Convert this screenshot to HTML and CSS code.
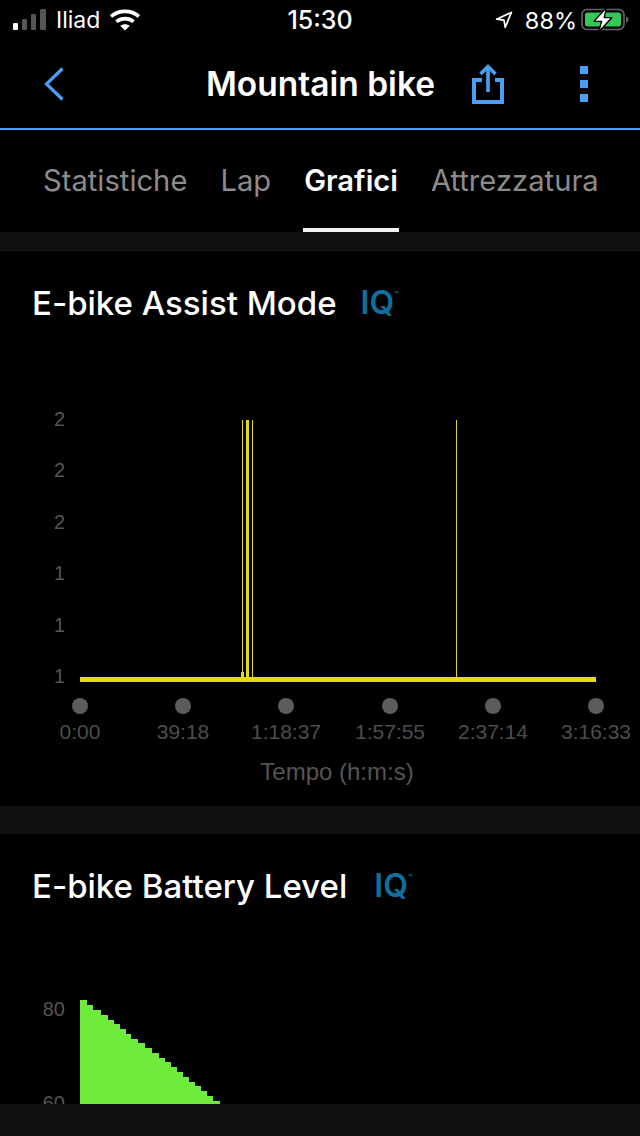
FILE: index.html
```html
<!DOCTYPE html>
<html lang="it">
<head>
  <meta charset="UTF-8" />
  <meta name="viewport" content="width=device-width, initial-scale=1.0" />
  <title>Mountain bike</title>
  <link rel="stylesheet" href="styles.css">
</head>
<body>
  <div class="page">
    <div class="status-bar">
      <div class="status-left">
        <svg class="icon-signal" width="34" height="22" viewBox="0 0 34 22">
          <rect x="0" y="14" width="5" height="7" rx="1.2" fill="#fff" />
          <rect x="9" y="10" width="5" height="11" rx="1.2" fill="#555" />
          <rect x="18" y="5" width="5" height="16" rx="1.2" fill="#555" />
          <rect x="27" y="0" width="6" height="21" rx="1.2" fill="#555" />
        </svg>
        <span class="carrier">Iliad</span>
        <svg class="icon-wifi" width="30" height="22" viewBox="0 0 30 22">
          <path d="M1 7.5C8.8 .6 21.2 .6 29 7.5" fill="none" stroke="#fff" stroke-width="3.6" />
          <path d="M6.4 12.6C11.2 8.6 18.8 8.6 23.6 12.6" fill="none" stroke="#fff" stroke-width="3.6" />
          <path d="M10.2 16.8L15 21.4L19.8 16.8C17 14.6 13 14.6 10.2 16.8Z" fill="#fff" />
        </svg>
      </div>
      <div class="status-time">15:30</div>
      <div class="status-right">
        <svg class="icon-location" width="18" height="18" viewBox="0 0 18 18">
          <path d="M16.4 1.4L1.6 8.2L9 9.2L10.2 16.4Z" fill="none" stroke="#fff" stroke-width="1.7" stroke-linejoin="round" />
        </svg>
        <span class="battery-text">88%</span>
        <svg class="icon-battery" width="48" height="26" viewBox="0 0 48 26">
          <rect x="1" y="2.5" width="42" height="20" rx="5" fill="none" stroke="#666" stroke-width="1.6" />
          <rect x="4" y="5.5" width="36" height="14" rx="2.5" fill="#34c759" />
          <path d="M45 9.5c1.8 .4 2.4 1.6 2.4 3s-.6 2.6-2.4 3Z" fill="#666" />
          <path d="M25.5 .6L13 14.4H20.6L17.6 25L31 10.6H23.2Z" fill="#fff" stroke="#000" stroke-width="1.4" stroke-linejoin="round" />
        </svg>
      </div>
    </div>

    <div class="nav-bar">
      <div class="nav-left">
        <svg width="20" height="34" viewBox="0 0 20 34">
          <path d="M18.5 1.5L2.5 17L18.5 32.5" fill="none" stroke="#4a9ff5" stroke-width="3.2" />
        </svg>
      </div>
      <div class="nav-title">Mountain bike</div>
      <div class="nav-right">
        <svg width="32" height="40" viewBox="0 0 32 40">
          <path d="M10 16H2V38H30V16H23" fill="none" stroke="#4a9ff5" stroke-width="4" />
          <path d="M16 3V28" fill="none" stroke="#4a9ff5" stroke-width="3.6" />
          <path d="M8.5 10L16 2.6L23.5 10" fill="none" stroke="#4a9ff5" stroke-width="3.6" />
        </svg>
        <div class="menu-dots">
          <span></span>
          <span></span>
          <span></span>
        </div>
      </div>
    </div>

    <div class="tabs">
      <div class="tab">Statistiche</div>
      <div class="tab">Lap</div>
      <div class="tab tab-active">Grafici</div>
      <div class="tab">Attrezzatura</div>
    </div>

    <div class="content">
      <div class="card card-assist">
        <div class="card-title">
          <span>E-bike Assist Mode</span>
          <span class="iq">IQ<sup>™</sup></span>
        </div>
        <svg class="chart" width="640" height="466" viewBox="0 340 640 466">
          <g class="y-labels">
            <text x="65" y="426">2</text>
            <text x="65" y="477">2</text>
            <text x="65" y="529">2</text>
            <text x="65" y="580">1</text>
            <text x="65" y="632">1</text>
            <text x="65" y="683">1</text>
          </g>
          <g fill="#e4dc10">
            <rect x="242" y="420" width="1" height="258" />
            <rect x="241" y="672" width="3" height="6" />
            <rect x="246" y="420" width="3" height="258" />
            <rect x="252" y="420" width="1" height="258" />
            <rect x="456" y="420" width="1" height="258" />
            <rect x="80" y="677" width="516" height="5" />
          </g>
          <g fill="#5c5c5c">
            <circle cx="80" cy="706" r="8" />
            <circle cx="183" cy="706" r="8" />
            <circle cx="286" cy="706" r="8" />
            <circle cx="390" cy="706" r="8" />
            <circle cx="493" cy="706" r="8" />
            <circle cx="596" cy="706" r="8" />
          </g>
          <g class="x-labels">
            <text x="80" y="739">0:00</text>
            <text x="183" y="739">39:18</text>
            <text x="286" y="739">1:18:37</text>
            <text x="390" y="739">1:57:55</text>
            <text x="493" y="739">2:37:14</text>
            <text x="596" y="739">3:16:33</text>
          </g>
          <text class="x-title" x="337" y="780">Tempo (h:m:s)</text>
        </svg>
      </div>

      <div class="card card-battery">
        <div class="card-title">
          <span>E-bike Battery Level</span>
          <span class="iq">IQ<sup>™</sup></span>
        </div>
        <svg class="chart" width="640" height="184" viewBox="0 920 640 184">
          <g class="y-labels">
            <text x="65" y="1016">80</text>
            <text x="65" y="1110">60</text>
          </g>
          <path fill="#6fec3a" d="M80 1104V1000H87V1005H93V1010H101V1015H108V1020H114V1024H120V1029H126V1034H131V1039H138V1043H145V1048H152V1053H159V1058H165V1062H171V1067H177V1072H183V1077H189V1082H195V1086H201V1091H207V1096H213V1101H220V1104Z" />
        </svg>
      </div>
    </div>

    <div class="bottom-bar"></div>
  </div>
</body>
</html>
```

FILE: styles.css
```css
html, body {
  margin: 0;
  padding: 0;
  background-color: #000;
}

.page {
  width: 640px;
  height: 1136px;
  display: flex;
  flex-direction: column;
  overflow: hidden;
  color: #fff;
  font-family: Inter, "Liberation Sans", sans-serif;
}

/* status bar */
.status-bar {
  height: 40px;
  flex: none;
  display: grid;
  grid-template-columns: 1fr auto 1fr;
  align-items: center;
  font-size: 23px;
  font-weight: 400;
}

.status-left {
  display: flex;
  align-items: center;
  padding-left: 13px;
}

.carrier {
  margin-left: 9px;
  color: #fff;
}

.icon-wifi {
  margin-left: 10px;
}

.status-time {
  font-size: 25px;
  font-weight: 500;
}

.status-right {
  display: flex;
  align-items: center;
  justify-content: flex-end;
  padding-right: 11px;
}

.battery-text {
  margin-left: 12px;
  margin-right: 4px;
  font-size: 23.5px;
}

/* nav */
.nav-bar {
  height: 88px;
  flex: none;
  display: grid;
  grid-template-columns: 1fr auto 1fr;
  align-items: center;
  border-bottom: 2px solid #4a9ff5;
}

.nav-left {
  display: flex;
  padding-left: 44px;
}

.nav-title {
  padding-left: 1px;
  font-size: 33.5px;
  font-weight: 600;
}

.nav-right {
  display: flex;
  align-items: center;
  justify-content: flex-end;
  gap: 76px;
  padding-right: 52px;
}

.menu-dots {
  display: flex;
  flex-direction: column;
  gap: 6px;
}

.menu-dots span {
  width: 8px;
  height: 8px;
  background-color: #4a9ff5;
}

/* tabs */
.tabs {
  height: 102px;
  flex: none;
  display: flex;
  gap: 33px;
  padding-left: 43px;
  box-sizing: border-box;
  font-size: 29.2px;
  color: #8c8c8c;
}

.tab {
  box-sizing: border-box;
  height: 102px;
  padding-top: 33px;
  white-space: nowrap;
}

.tab-active {
  margin: 0 -1px;
  padding-left: 1px;
  padding-right: 1px;
  color: #fff;
  font-weight: 600;
  border-bottom: 4px solid #f4f4f4;
}

/* cards */
.content {
  flex: 1;
  min-height: 0;
  display: flex;
  flex-direction: column;
  background-color: #111;
  overflow: hidden;
}

.card {
  background-color: #000;
  flex: none;
}

.card-assist {
  margin-top: 19px;
  height: 555px;
}

.card-battery {
  margin-top: 28px;
}

.card-title {
  height: 89px;
  box-sizing: border-box;
  padding-top: 33px;
  padding-left: 32px;
  display: flex;
  align-items: flex-start;
  font-size: 33px;
  font-weight: 500;
  line-height: 38px;
}

.card-battery .card-title {
  height: 86px;
  padding-top: 33px;
}

.iq {
  margin-left: 24px;
  color: #0f6f9f;
  font-weight: 600;
  font-size: 32px;
}

.card-battery .iq {
  margin-left: 27px;
}

.iq sup {
  font-size: 7px;
  line-height: 0;
  vertical-align: 17px;
}

.chart {
  display: block;
}

.y-labels text {
  font-family: "Liberation Sans", sans-serif;
  font-size: 20px;
  fill: #555;
  text-anchor: end;
}

.x-labels text {
  font-family: "Liberation Sans", sans-serif;
  font-size: 21px;
  fill: #4d4d4d;
  text-anchor: middle;
}

.x-title {
  font-family: "Liberation Sans", sans-serif;
  font-size: 24px;
  fill: #555;
  text-anchor: middle;
}

.bottom-bar {
  height: 32px;
  flex: none;
  background-color: #111;
}
```
